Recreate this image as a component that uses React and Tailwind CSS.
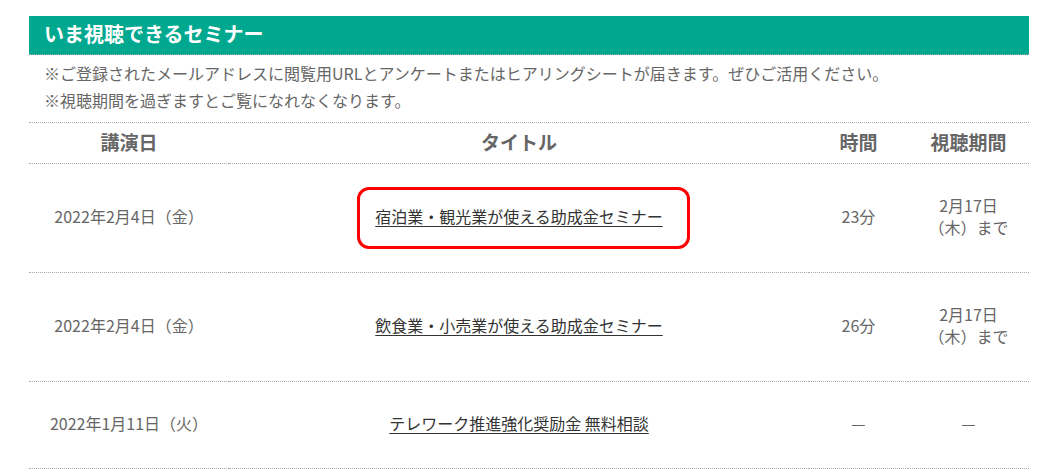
const seminars = [
  {
    date: "2022年2月4日（金）",
    title: "宿泊業・観光業が使える助成金セミナー",
    time: "23分",
    period: ["2月17日", "（木）まで"],
    marked: true,
  },
  {
    date: "2022年2月4日（金）",
    title: "飲食業・小売業が使える助成金セミナー",
    time: "26分",
    period: ["2月17日", "（木）まで"],
  },
  {
    date: "2022年1月11日（火）",
    title: "テレワーク推進強化奨励金 無料相談",
    time: "—",
    period: ["—"],
  },
];

const cell = "border-b border-dotted border-[#aaa] text-center";
const bodyCell = `${cell} flex items-center justify-center pt-[30px] pb-[34px]`;

function App() {
  return (
    <div
      className="min-h-screen bg-white pt-4"
      style={{ fontFamily: '"Noto Sans CJK JP", "Noto Sans", sans-serif' }}
    >
      <div className="ml-[29px] w-[1000px]">
        <h2 className="h-[39px] border-b border-dotted border-[#aaa] bg-[#00a88f] pl-[15px] text-[20px] font-bold leading-[36px] text-white">
          いま視聴できるセミナー
        </h2>

        <div className="border-b border-dotted border-[#aaa] pb-[8px] pl-[15px] pt-[5px] text-[16px] leading-[27px] text-[#666]">
          <p>※ご登録されたメールアドレスに閲覧用URLとアンケートまたはヒアリングシートが届きます。ぜひご活用ください。</p>
          <p>※視聴期間を過ぎますとご覧になれなくなります。</p>
        </div>

        <div className="grid grid-cols-[200px_580px_99px_121px]">
          {["講演日", "タイトル", "時間", "視聴期間"].map((h) => (
            <div key={h} className={`${cell} pb-[7px] pt-[5px] text-[19px] font-bold leading-[28px] text-[#666]`}>
              {h}
            </div>
          ))}

          {seminars.map((s) => (
            <div key={s.title} className="contents text-[16px] leading-[22px] text-[#666]">
              <div className={bodyCell}>{s.date}</div>
              <div className={`${bodyCell} relative`}>
                <a href="#" className="text-[#333] underline underline-offset-[3px]">
                  {s.title}
                </a>
                {s.marked && (
                  <span className="pointer-events-none absolute left-[128px] top-[23px] h-[62px] w-[333px] rounded-[12px] border-[3px] border-[#ff0000]" />
                )}
              </div>
              <div className={bodyCell}>{s.time}</div>
              <div className={`${bodyCell} flex-col`}>
                {s.period.map((p) => (
                  <span key={p}>{p}</span>
                ))}
              </div>
            </div>
          ))}
        </div>
      </div>
    </div>
  );
}

export default App;
